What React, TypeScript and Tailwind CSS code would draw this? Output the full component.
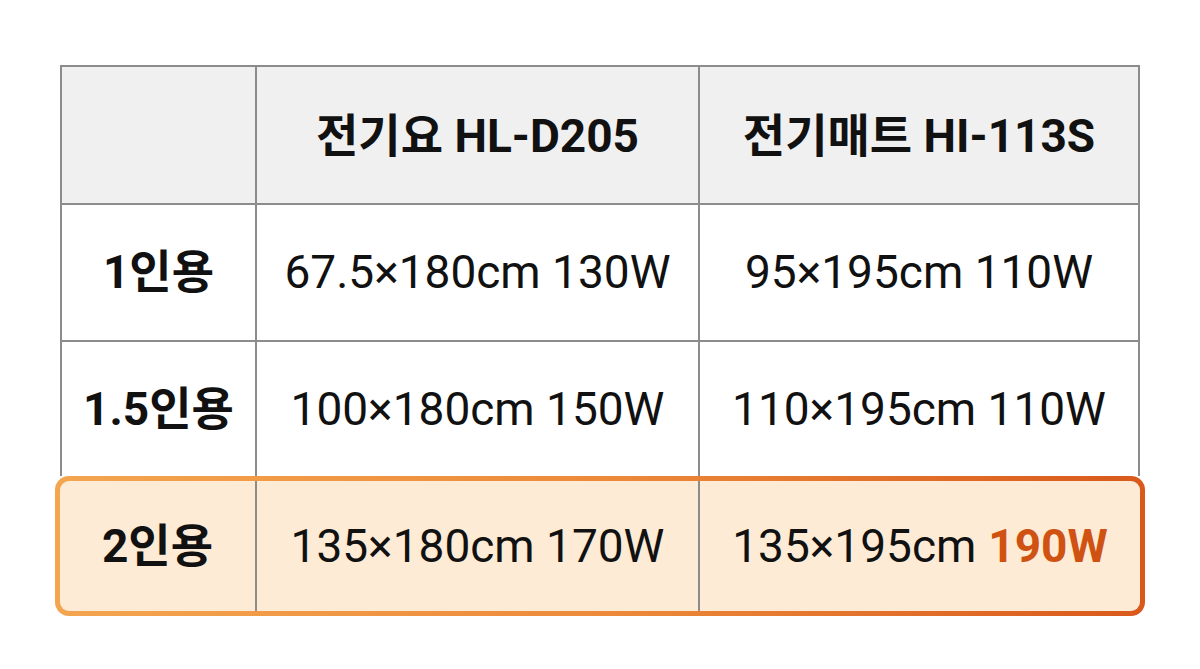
const rows = [
  { label: "1인용", a: "67.5×180cm 130W", b: "95×195cm 110W" },
  { label: "1.5인용", a: "100×180cm 150W", b: "110×195cm 110W" },
];

const font = { fontFamily: '"Roboto", "Noto Sans CJK KR", sans-serif' };

export default function App() {
  return (
    <div className="min-h-screen w-full bg-white pt-[65px]" style={font}>
      <div className="mx-auto w-[1080px]">
        <div className="border-x-2 border-t-2 border-[#8c8c8c]">
          <div className="grid h-[138px] grid-cols-[193px_443px_1fr] border-b-2 border-[#8c8c8c] bg-[#f0f0f0]">
            <div />
            <div className="flex items-center justify-center border-l-2 border-[#8c8c8c] pt-[2px] text-[46px] font-bold text-[#111]">
              전기요 HL-D205
            </div>
            <div className="flex items-center justify-center border-l-2 border-[#8c8c8c] pt-[2px] text-[46px] font-bold text-[#111]">
              전기매트 HI-113S
            </div>
          </div>
          {rows.map((r, i) => (
            <div
              key={r.label}
              className={`grid grid-cols-[193px_443px_1fr] ${
                i === 0 ? "h-[137px] border-b-2 border-[#8c8c8c]" : "h-[134px]"
              }`}
            >
              <div className="flex items-center justify-center text-[46px] font-bold text-[#111]">
                {r.label}
              </div>
              <div className="flex items-center justify-center border-l-2 border-[#8c8c8c] text-[46px] text-[#111]">
                {r.a}
              </div>
              <div className="flex items-center justify-center border-l-2 border-[#8c8c8c] text-[46px] text-[#111]">
                {r.b}
              </div>
            </div>
          ))}
        </div>
        <div className="-mx-[5px] rounded-[14px] bg-linear-to-r from-[#f4a54f] via-[#ec8a3a] to-[#d9591b] p-[5px]">
          <div className="grid h-[130px] grid-cols-[195px_443px_1fr] rounded-[9px] bg-[#fdebd5]">
            <div className="flex items-center justify-center text-[46px] font-bold text-[#111]">
              2인용
            </div>
            <div className="flex items-center justify-center border-l-2 border-[#8c8c8c] text-[46px] text-[#111]">
              135×180cm 170W
            </div>
            <div className="flex items-center justify-center gap-[12px] border-l-2 border-[#8c8c8c] text-[46px] text-[#111]">
              <span>135×195cm</span>
              <span className="font-bold text-[#cf5212]">190W</span>
            </div>
          </div>
        </div>
      </div>
    </div>
  );
}
